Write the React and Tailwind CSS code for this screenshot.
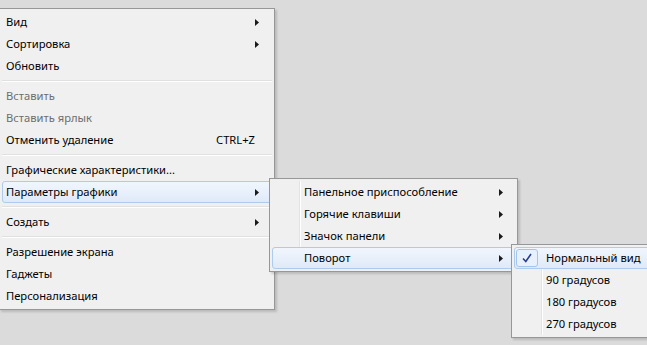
import React from 'react'

const Arrow = () => (
  <svg width="4" height="7" viewBox="0 0 4 7" className="shrink-0">
    <polygon points="0,0 4,3.5 0,7" fill="#1a1a1a" />
  </svg>
)

const Sep = () => (
  <div className="h-2 flex flex-col justify-center">
    <div className="h-px bg-[#e0e0e0]" />
    <div className="h-px bg-white" />
  </div>
)

const hl = 'rounded-[3px] border border-[#aecbef] bg-gradient-to-b from-[#f1f6fd] to-[#dfeaf8]'

const Item = ({ label, arrow, shortcut, disabled, active, pad = 'pl-[3px]', right = 'pr-[12px]' }) => (
  <div className={`h-[22px] flex items-center ${right} ${pad} ${active ? hl : 'border border-transparent'}`}>
    <span className={`flex-1 whitespace-nowrap ${disabled ? 'text-[#6d6d6d]' : 'text-black'}`}>{label}</span>
    {shortcut && <span className="mr-[1px]">{shortcut}</span>}
    {arrow && <Arrow />}
  </div>
)

export default function App() {
  const font = { fontFamily: '"Noto Sans", "Open Sans", sans-serif' }

  return (
    <div className="relative w-[647px] h-[345px] overflow-hidden bg-[#dbdbdb] text-[11.2px] leading-none" style={font}>
      {/* main menu */}
      <div className="absolute left-[-1px] top-[8px] w-[276px] border border-[#979797] bg-[#f0f0f0] p-[2px] shadow-[2px_2px_2px_rgba(0,0,0,0.15)]">
        <Item label="Вид" arrow />
        <Item label="Сортировка" arrow />
        <Item label="Обновить" />
        <Sep />
        <Item label="Вставить" disabled />
        <Item label="Вставить ярлык" disabled />
        <Item label="Отменить удаление" shortcut="CTRL+Z" right="pr-[15px]" />
        <Sep />
        <Item label="Графические характеристики..." />
        <Item label="Параметры графики" arrow active />
        <Sep />
        <Item label="Создать" arrow />
        <Sep />
        <Item label="Разрешение экрана" />
        <Item label="Гаджеты" />
        <Item label="Персонализация" />
      </div>

      {/* submenu: Параметры графики */}
      <div className="absolute left-[269px] top-[178px] w-[249px] border border-[#979797] bg-[#f0f0f0] p-[2px] shadow-[2px_2px_2px_rgba(0,0,0,0.15)]">
        <div className="absolute left-[29px] top-[2px] bottom-[2px] w-px bg-[#e2e3e3]" />
        <div className="absolute left-[30px] top-[2px] bottom-[2px] w-px bg-white" />
        <div className="relative">
          <Item label="Панельное приспособление" arrow pad="pl-[31px]" right="pr-[11px]" />
          <Item label="Горячие клавиши" arrow pad="pl-[31px]" right="pr-[11px]" />
          <Item label="Значок панели" arrow pad="pl-[31px]" right="pr-[11px]" />
          <Item label="Поворот" arrow active pad="pl-[31px]" right="pr-[11px]" />
        </div>
      </div>

      {/* submenu: Поворот */}
      <div className="absolute left-[511px] top-[244px] w-[150px] border border-[#979797] bg-[#f0f0f0] p-[2px] shadow-[2px_2px_2px_rgba(0,0,0,0.15)]">
        <div className="absolute left-[29px] top-[2px] bottom-[2px] w-px bg-[#e2e3e3]" />
        <div className="absolute left-[30px] top-[2px] bottom-[2px] w-px bg-white" />
        <div className="relative">
          <div className={`h-[22px] flex items-center ${hl}`}>
            <div className="ml-[1px] w-[22px] h-[18px] rounded-[3px] border border-[#a5c4ec] bg-[#e8f0fb] flex items-center justify-center">
              <svg width="10" height="10" viewBox="0 0 10 10">
                <path d="M1 5.5 L3.8 8.5 L9 1" stroke="#2a3f8c" strokeWidth="1.6" fill="none" />
              </svg>
            </div>
            <span className="ml-[8px] whitespace-nowrap">Нормальный вид</span>
          </div>
          <Item label="90 градусов" pad="pl-[31px]" />
          <Item label="180 градусов" pad="pl-[31px]" />
          <Item label="270 градусов" pad="pl-[31px]" />
        </div>
      </div>
    </div>
  )
}
